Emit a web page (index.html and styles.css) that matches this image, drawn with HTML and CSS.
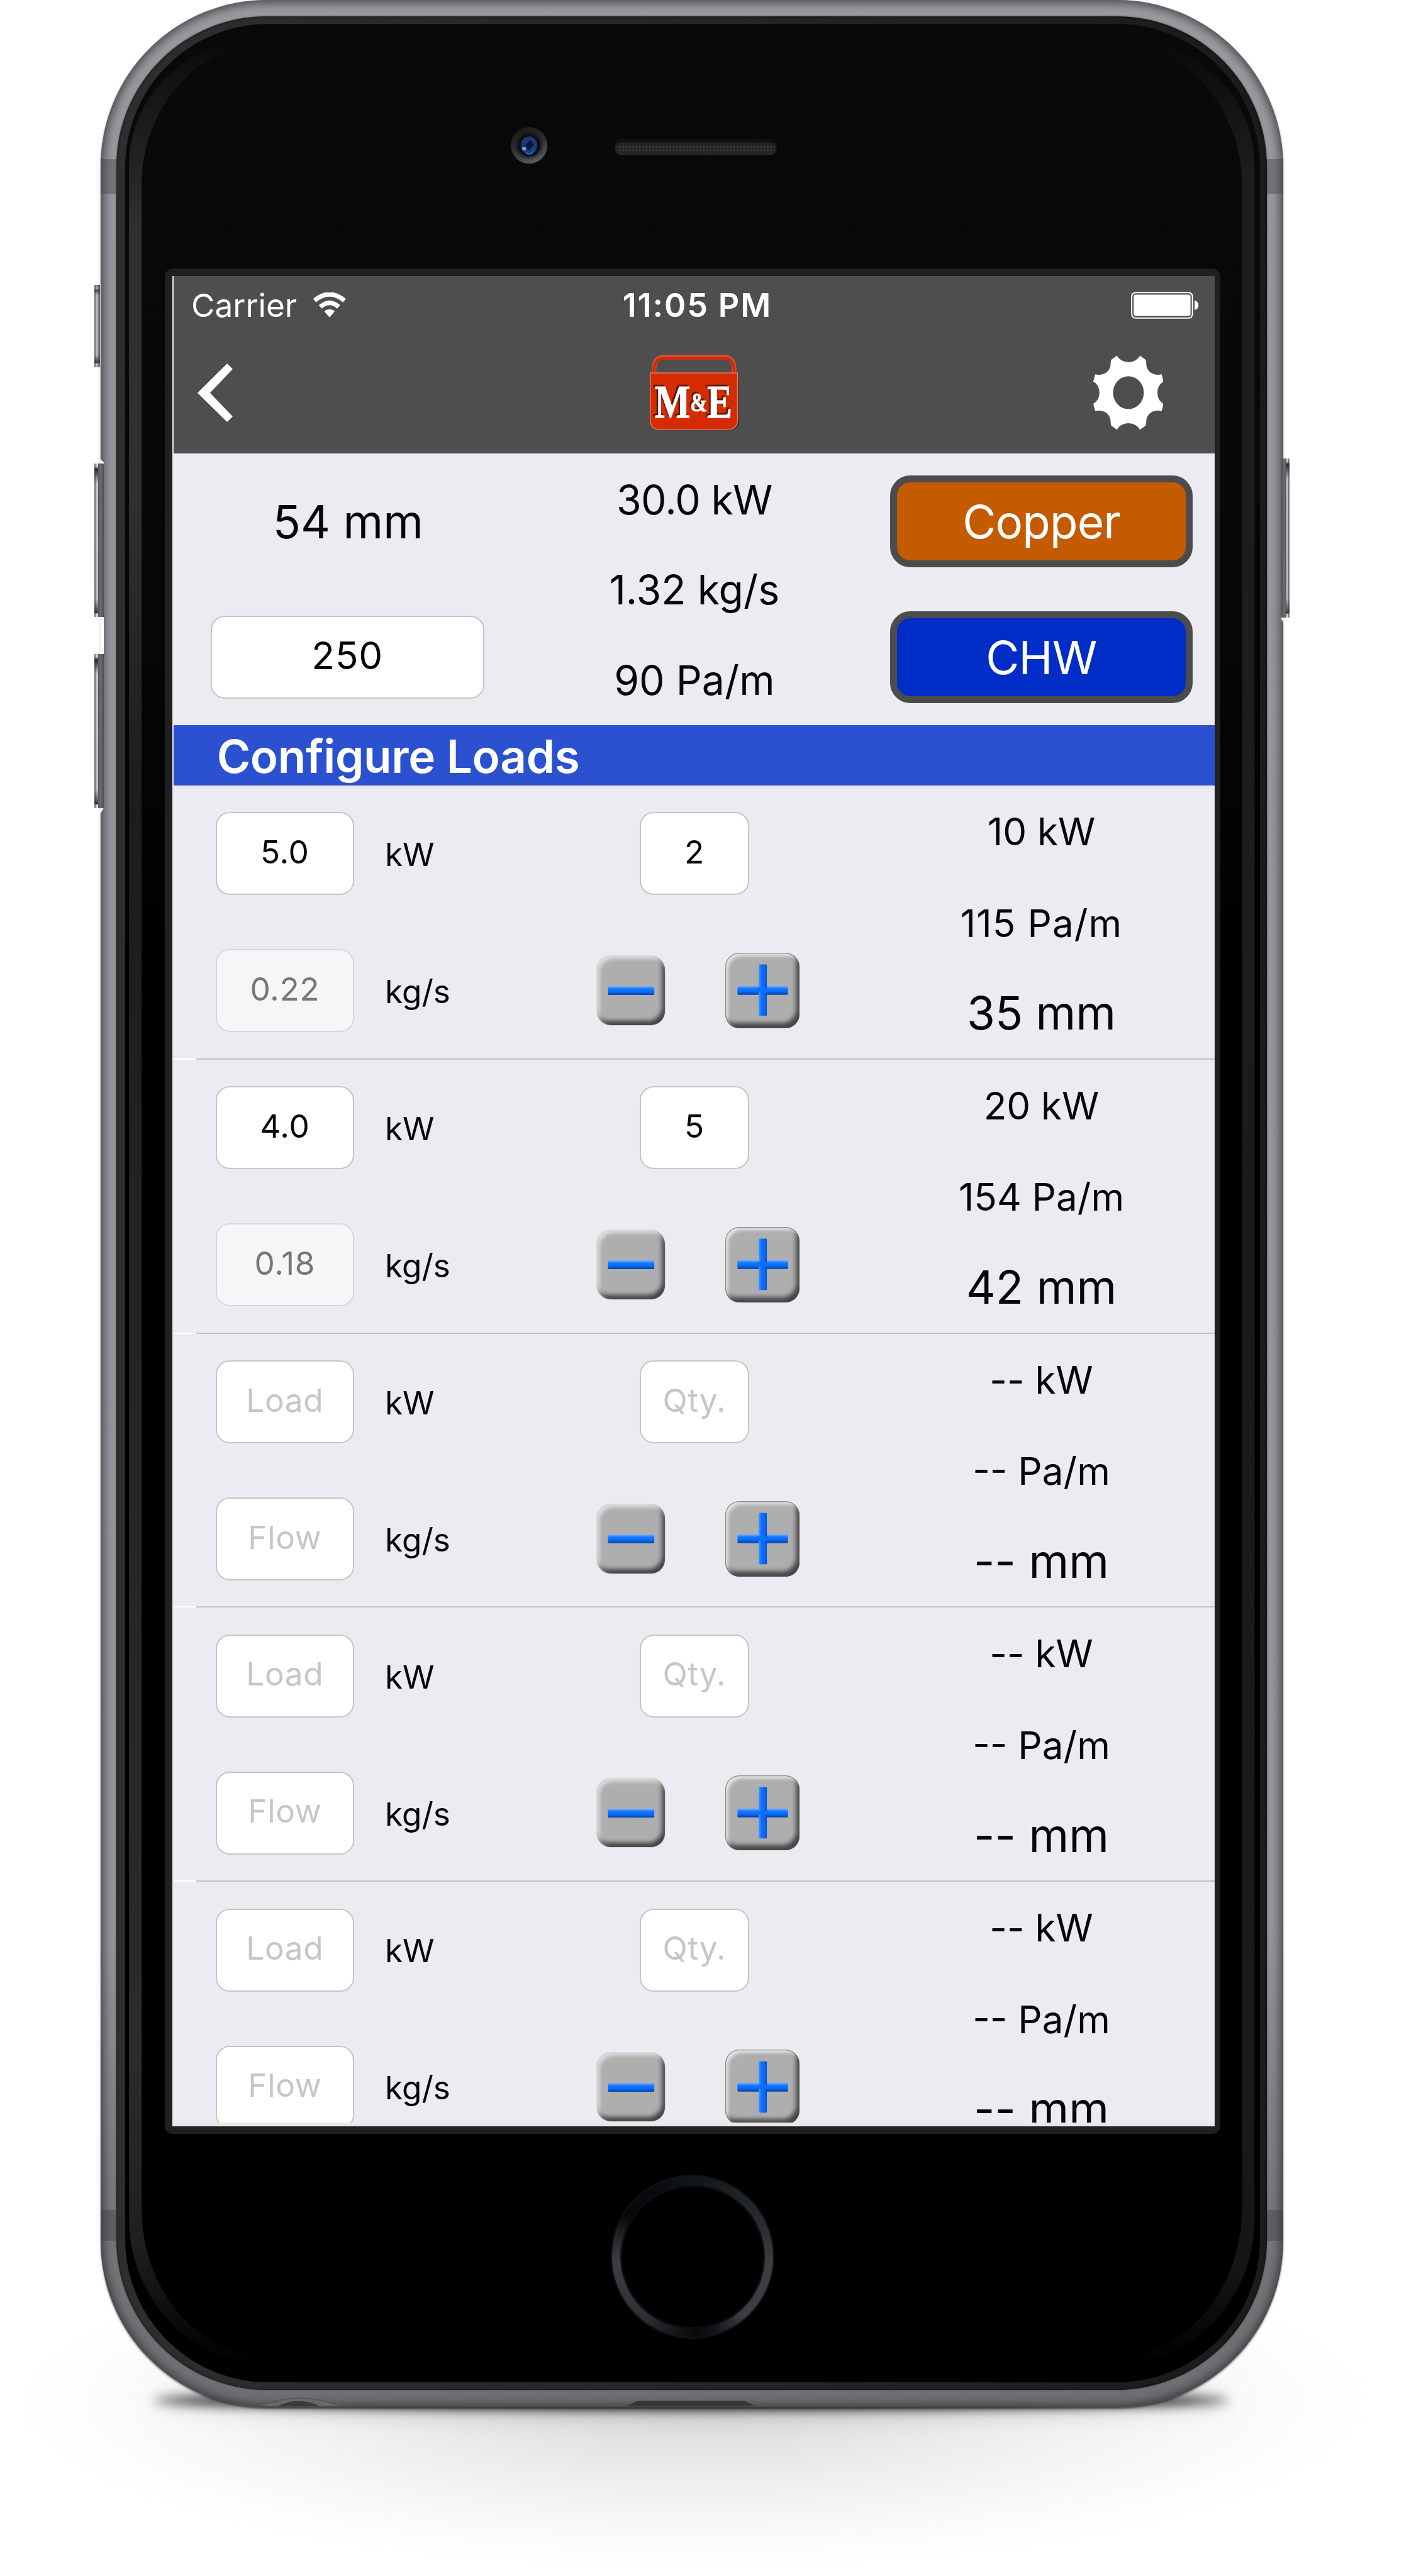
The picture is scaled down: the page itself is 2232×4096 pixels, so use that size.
FILE: index.html
```html
<!DOCTYPE html>
<html lang="en">
<head>
<meta charset="utf-8">
<title>Configure Loads</title>
<link rel="stylesheet" href="styles.css">
</head>
<body>
<svg class="defs" aria-hidden="true">
  <defs>
    <linearGradient id="barH" x1="0" y1="0" x2="0" y2="1">
      <stop offset="0" stop-color="#6fb0ff"/><stop offset=".3" stop-color="#1577ff"/><stop offset=".65" stop-color="#066aff"/><stop offset="1" stop-color="#0a3f9c"/>
    </linearGradient>
    <linearGradient id="barV" x1="0" y1="0" x2="1" y2="0">
      <stop offset="0" stop-color="#4a9bff"/><stop offset=".35" stop-color="#0a6fff"/><stop offset=".7" stop-color="#066aff"/><stop offset="1" stop-color="#0a4cb8"/>
    </linearGradient>
  </defs>
  <symbol id="minus" viewBox="0 0 141 143"><rect x="23" y="63" width="96" height="18" rx="2" fill="url(#barH)"/></symbol>
  <symbol id="plus" viewBox="0 0 154 156">
    <rect x="25" y="69" width="105" height="18" rx="2" fill="url(#barH)"/>
    <rect x="69" y="24" width="17" height="107" rx="2" fill="url(#barV)"/>
    <rect x="66" y="73" width="23" height="9" fill="#0a6fff"/>
  </symbol>
</svg>

<div class="stage">
  <div class="shadow-soft"></div>
  <div class="shadow-contact"></div>

  <div class="device">
    <i class="band band-tl"></i><i class="band band-tr"></i><i class="band band-bl"></i><i class="band band-br"></i>
    <i class="notch notch-left"></i><i class="notch notch-right"></i>
    <i class="key key-mute"></i><i class="key key-up"></i><i class="key key-down"></i><i class="key key-power"></i>
    <svg class="ports" viewBox="0 0 2454 40">
      <path d="M325 38Q415 2 502 38Z" fill="#58595c"/>
      <path d="M335 38Q415 7 492 38Z" fill="#68696d"/>
      <path d="M366 38Q410 16 455 38Z" fill="#3a3a3b"/>
      <path d="M1091 38L1114 27H1337L1358 38Z" fill="#363636"/>
    </svg>
    <div class="ring">
      <div class="face">
        <svg class="glare" viewBox="0 0 2355 4896" preserveAspectRatio="none">
          <defs>
            <linearGradient id="gl" x1="0" y1="28" x2="0" y2="4860" gradientUnits="userSpaceOnUse">
              <stop offset="0" stop-color="#2f3030" stop-opacity="0"/><stop offset=".035" stop-color="#2b2d2c" stop-opacity=".5"/><stop offset=".08" stop-color="#2d302f"/><stop offset=".2" stop-color="#2f2f2f"/><stop offset=".33" stop-color="#1c1c1c"/><stop offset=".5" stop-color="#222"/><stop offset=".87" stop-color="#2b2b2b"/><stop offset=".95" stop-color="#1e1e1e"/><stop offset="1" stop-color="#1e1e1e" stop-opacity="0"/>
            </linearGradient>
            <linearGradient id="gr" x1="0" y1="28" x2="0" y2="4860" gradientUnits="userSpaceOnUse">
              <stop offset="0" stop-color="#1e1e1e" stop-opacity="0"/><stop offset=".06" stop-color="#1e1e1e"/><stop offset=".9" stop-color="#191919"/><stop offset=".96" stop-color="#151515"/><stop offset="1" stop-color="#151515" stop-opacity="0"/>
            </linearGradient>
          </defs>
          <path fill="url(#gl)" d="M8 295C8 148 130 28 293 28L285 32C120 60 34 200 34 333V4532C34 4680 120 4820 285 4850L293 4858C130 4858 8 4715 8 4557Z"/>
          <path fill="url(#gr)" d="M2344 295C2344 148 2222 28 2059 28L2067 32C2232 60 2318 200 2318 333V4532C2318 4680 2232 4820 2067 4850L2059 4858C2222 4858 2344 4715 2344 4557Z"/>
        </svg>

        <div class="top-parts">
          <svg class="camera" viewBox="0 0 76 76">
            <defs>
              <linearGradient id="cam" x1=".3" y1="0" x2=".7" y2="1"><stop offset="0" stop-color="#191919"/><stop offset=".5" stop-color="#303030"/><stop offset="1" stop-color="#5e5e5e"/></linearGradient>
              <radialGradient id="lens"><stop offset="0" stop-color="#0b1020"/><stop offset=".55" stop-color="#0b0d14"/><stop offset="1" stop-color="#0b0c10" stop-opacity="0"/></radialGradient>
            </defs>
            <circle cx="38" cy="38" r="38" fill="url(#cam)"/>
            <circle cx="38" cy="38" r="31" fill="url(#lens)"/>
            <circle cx="38" cy="38" r="23" fill="#0c0e15"/>
            <ellipse cx="38" cy="38" rx="17" ry="18" fill="#1c3a7c"/>
            <path d="M27 46Q38 62 50 46L46 55Q38 60 31 55Z" fill="#2a5fc4"/>
            <path d="M30 38L40 27L48 36L38 49Z" fill="#0c1633"/>
            <rect x="24" y="42" width="7" height="6" fill="#8fa4d6"/>
          </svg>
          <div class="speaker"></div>
        </div>

        <div class="bezel">
          <div class="panel">
            <main class="app">
              <header class="header">
                <div class="status">
                  <div class="status-left">
                    <span class="carrier">Carrier</span>
                    <svg class="wifi" viewBox="0 0 70 52">
                      <path d="M35 52L24 39Q35 31 46 39Z" fill="#fff"/>
                      <path d="M16 30Q35 13 54 30" fill="none" stroke="#fff" stroke-width="9.5"/>
                      <path d="M4 17Q35-9 66 17" fill="none" stroke="#fff" stroke-width="9.5"/>
                    </svg>
                  </div>
                  <span class="clock">11:05 PM</span>
                  <svg class="battery" viewBox="0 0 141 56">
                    <rect x="1.5" y="1.5" width="126" height="53" rx="8" fill="none" stroke="#fff" stroke-width="2.6"/>
                    <rect x="5.5" y="6" width="118" height="44" rx="4" fill="#fff"/>
                    <path d="M132 18Q140 20 140 28T132 38Z" fill="#fff"/>
                  </svg>
                </div>
                <nav class="nav">
                  <svg class="back" viewBox="0 0 73 122"><path d="M61.5 0L73 11.500L26 61L73 110L61.500 121.500L0 61Z" fill="#fff"/></svg>
                  <svg class="logo" viewBox="0 0 186 158">
                    <path d="M9 42V28Q9 5 32 5H152Q175 5 175 28V42" fill="none" stroke="#e2563c" stroke-width="9"/>
                    <path d="M9 42V28Q10 7 32 7H152Q174 7 175 28V42" fill="none" stroke="#d12a04" stroke-width="6"/>
                    <rect x="2" y="40" width="183" height="117" rx="18" fill="#5b1608" opacity=".6"/>
                    <path d="M1 38H182V134Q182 155 162 155H20Q1 155 1 134Z" fill="#d42b02" stroke="#e47560" stroke-width="2"/>
                    <g class="logo-text">
                      <text x="10" y="131" font-size="98" textLength="74" lengthAdjust="spacingAndGlyphs">M</text>
                      <text x="84" y="117" font-size="54" textLength="35" lengthAdjust="spacingAndGlyphs">&amp;</text>
                      <text x="119" y="131" font-size="98" textLength="52" lengthAdjust="spacingAndGlyphs">E</text>
                    </g>
                  </svg>
                  <svg class="gear" viewBox="-73 -77.500 146 155">
                    <path fill="#fff" fill-rule="evenodd" d="M24-77L36-68L37-62C36-46 48-37 62-37L69-38L73-23C56-15 56 15 73 23L69 38L62 37C48 37 36 46 37 62L36 68L24 77C14 59-14 59-24 77L-36 68L-37 62C-36 46-48 37-62 37L-69 38L-73 23C-56 15-56-15-73-23L-69-38L-62-37C-48-37-36-46-37-62L-36-68L-24-77C-14-59 14-59 24-77ZM0-34A32 34 0 1 0 0 34A32 34 0 1 0 0-34Z"/>
                  </svg>
                </nav>
              </header>

              <section class="summary">
                <div class="summary-size">
                  <div class="half t17">54 mm</div>
                  <div class="half"><div class="field field-wide">250</div></div>
                </div>
                <div class="summary-totals">
                  <div class="total tight">30.0 kW</div>
                  <div class="total total-mid">1.32 kg/s</div>
                  <div class="total">90 Pa/m</div>
                </div>
                <div class="summary-actions">
                  <div class="half"><div class="btn btn-copper">Copper</div></div>
                  <div class="half"><div class="btn btn-chw">CHW</div></div>
                </div>
              </section>

              <h2 class="section-title">Configure Loads</h2>

              <section class="row">
                <div class="inputs">
                  <div class="line"><div class="field">5.0</div><span class="unit">kW</span></div>
                  <div class="line"><div class="field disabled">0.22</div><span class="unit">kg/s</span></div>
                </div>
                <div class="count">
                  <div class="field field-qty">2</div>
                  <div class="steps"><div class="step step-minus"><svg><use href="#minus"/></svg></div><div class="step step-plus"><svg><use href="#plus"/></svg></div></div>
                </div>
                <div class="result"><div>10 kW</div><div class="wide">115 Pa/m</div><div class="pipe">35 mm</div></div>
              </section>

              <section class="row">
                <div class="inputs">
                  <div class="line"><div class="field">4.0</div><span class="unit">kW</span></div>
                  <div class="line"><div class="field disabled">0.18</div><span class="unit">kg/s</span></div>
                </div>
                <div class="count">
                  <div class="field field-qty">5</div>
                  <div class="steps"><div class="step step-minus"><svg><use href="#minus"/></svg></div><div class="step step-plus"><svg><use href="#plus"/></svg></div></div>
                </div>
                <div class="result"><div>20 kW</div><div>154 Pa/m</div><div class="pipe">42 mm</div></div>
              </section>

              <section class="row">
                <div class="inputs">
                  <div class="line"><div class="field empty">Load</div><span class="unit">kW</span></div>
                  <div class="line"><div class="field empty">Flow</div><span class="unit">kg/s</span></div>
                </div>
                <div class="count">
                  <div class="field field-qty empty">Qty.</div>
                  <div class="steps"><div class="step step-minus"><svg><use href="#minus"/></svg></div><div class="step step-plus"><svg><use href="#plus"/></svg></div></div>
                </div>
                <div class="result"><div>-- kW</div><div>-- Pa/m</div><div class="pipe">-- mm</div></div>
              </section>

              <section class="row">
                <div class="inputs">
                  <div class="line"><div class="field empty">Load</div><span class="unit">kW</span></div>
                  <div class="line"><div class="field empty">Flow</div><span class="unit">kg/s</span></div>
                </div>
                <div class="count">
                  <div class="field field-qty empty">Qty.</div>
                  <div class="steps"><div class="step step-minus"><svg><use href="#minus"/></svg></div><div class="step step-plus"><svg><use href="#plus"/></svg></div></div>
                </div>
                <div class="result"><div>-- kW</div><div>-- Pa/m</div><div class="pipe">-- mm</div></div>
              </section>

              <section class="row">
                <div class="inputs">
                  <div class="line"><div class="field empty">Load</div><span class="unit">kW</span></div>
                  <div class="line"><div class="field empty">Flow</div><span class="unit">kg/s</span></div>
                </div>
                <div class="count">
                  <div class="field field-qty empty">Qty.</div>
                  <div class="steps"><div class="step step-minus"><svg><use href="#minus"/></svg></div><div class="step step-plus"><svg><use href="#plus"/></svg></div></div>
                </div>
                <div class="result"><div>-- kW</div><div>-- Pa/m</div><div class="pipe">-- mm</div></div>
              </section>
            </main>
          </div>
        </div>

        <div class="home"><div class="home-band"><div class="home-pad"></div></div></div>
      </div>
    </div>
  </div>
</div>
</body>
</html>
```
FILE: styles.css
```css
/* 1rem = 100 artwork units */
html { font-size: 76.596px; }
* { box-sizing: border-box; }
body {
  margin: 0;
  background: #fff;
  font-family: Inter, "Liberation Sans", sans-serif;
  color: #060606;
}
.defs { position: absolute; width: 0; height: 0; }
.stage {
  position: relative;
  width: 2232px;
  height: 4096px;
  padding-left: 2.09rem;
  overflow: hidden;
}

/* floor shadows */
.shadow-soft {
  position: absolute;
  left: 0.1rem;
  top: 46.3rem;
  width: 28.6rem;
  height: 7.1rem;
  background: radial-gradient(ellipse closest-side, rgba(0,0,0,.15), rgba(0,0,0,.11) 25%, rgba(0,0,0,.055) 55%, rgba(0,0,0,.018) 80%, transparent);
}
.shadow-contact {
  position: absolute;
  left: 3.2rem;
  top: 49.66rem;
  width: 22.3rem;
  height: .34rem;
  border-radius: 50%;
  background: #000;
  box-shadow: 0 0 .45rem .08rem rgba(0,0,0,.22);
  filter: blur(.12rem);
}

/* device body */
.device {
  position: relative;
  width: 24.54rem;
  height: 49.975rem;
  padding: .34rem .34rem .365rem .33rem;
  border-radius: 3.45rem;
  background: linear-gradient(#9a9b9f 0, #97989e 10%, #95969c 80%, #76777b 92%, #6e6f73 100%);
  box-shadow: inset 0 0 .2rem .06rem rgba(38,38,42,.72), 0 .02rem .04rem rgba(0,0,0,.5);
}
.band {
  position: absolute;
  width: .34rem;
  height: .72rem;
  background: rgba(60,62,64,.4);
}
.band-tl { left: 0; top: 3.3rem; }
.band-tr { right: 0; top: 3.3rem; }
.band-bl { left: 0; top: 45.88rem; height: .64rem; }
.band-br { right: 0; top: 45.88rem; height: .64rem; }
.notch { position: absolute; width: .08rem; background: #fff; }
.notch-left { left: -.01rem; top: 9.53rem; height: 7.37rem; clip-path: polygon(0 0, 100% 1%, 100% 98%, 0 100%); }
.notch-right { right: -.01rem; width: .05rem; top: 9.5rem; height: 3.42rem; clip-path: polygon(0 2%, 100% 0, 100% 100%, 0 98%); }
.key {
  position: absolute;
  left: -.13rem;
  width: .2rem;
  border-radius: .05rem 0 0 .05rem;
  background:
    linear-gradient(90deg, transparent 38%, #55575c 39%, #6a6c71 65%, #4d4f53),
    linear-gradient(#c9cacf 0, #c9cacf 2%, #2b2c31 3.500%, #3a3b40 5%, #c3c4ca 13%, #b9bcc2 88%, #4a4b50 96%, #2b2c31 97%, #d0d1d4 98%);
}
.key::before {
  content: "";
  position: absolute;
  inset: 0 auto 0 0;
  width: .02rem;
  background: rgba(50,52,56,.6);
}
.key-mute { width: .12rem; top: 5.92rem; height: 1.7rem; background: linear-gradient(#8b8c92 0, #b4b5bb 4%, #4b4c51 7%, #bfc2c9 12%, #bfc2c9 85%, #3a3b40 94%, #c4c5c9 96%); box-shadow: inset -.04rem 0 .04rem rgba(60,60,66,.7); }
.key-up { top: 9.62rem; height: 3.19rem; }
.key-down { top: 13.58rem; height: 3.19rem; }
.key-power { left: auto; right: -.13rem; width: .17rem; top: 9.52rem; height: 3.3rem; transform: scaleX(-1); }
.ports { position: absolute; left: 0; bottom: 0; width: 24.54rem; height: .4rem; }

.ring {
  height: 49.27rem;
  padding: .16rem .14rem .15rem .18rem;
  border-radius: 3.12rem;
  background: linear-gradient(90deg, #2e2e2e, #282828 40%, #1b1b1b);
  box-shadow: inset 0 0 .05rem #0c0c0c, 0 0 .04rem #3f4044;
}
.face {
  position: relative;
  height: 48.96rem;
  border-radius: 2.97rem;
  background: linear-gradient(#090909 0, #080808 20%, #000 42%);
}
.glare { position: absolute; inset: 0; width: 100%; height: 100%; }

.top-parts {
  display: flex;
  align-items: flex-start;
  gap: 1.4rem;
  height: 5.08rem;
  padding: 2.136rem 0 0 8rem;
}
.camera { width: .76rem; height: .76rem; }
.speaker {
  width: 3.36rem;
  height: .33rem;
  margin-top: .255rem;
  border-radius: .16rem;
  background: radial-gradient(circle, #3c3c3c 30%, #222 60%) 0 .06rem / .07rem .07rem;
  box-shadow: inset 0 .08rem .05rem #101010, inset 0 -.08rem .02rem #262626;
}

.bezel {
  width: 21.91rem;
  height: 38.72rem;
  margin-left: .82rem;
  padding: .15rem 0 0 .162rem;
  border-radius: .17rem;
  background: #202020;
}
.panel {
  width: 21.633rem;
  height: 38.41rem;
  padding-left: .028rem;
  background: #e8e7e9;
}
.app {
  width: 21.605rem;
  height: 38.33rem;
  overflow: hidden;
  background: #ecebf2;
}

/* header */
.header { height: 3.685rem; background: #4e4e4e; color: #fff; }
.status {
  display: grid;
  grid-template-columns: 1fr auto 1fr;
  align-items: center;
  height: 1.21rem;
  padding: 0 .325rem 0 .36rem;
  font-size: .67rem;
}
.status-left { display: flex; align-items: center; gap: .32rem; }
.wifi { width: .7rem; height: .52rem; }
.clock { font-size: .68rem; font-weight: 600; letter-spacing: .036em; margin-right: -.036em; padding-left: .06rem; }
.battery { width: 1.41rem; height: .56rem; justify-self: end; }
.nav {
  display: grid;
  grid-template-columns: 1fr auto 1fr;
  align-items: center;
  height: 2.435rem;
  padding: 0 1.07rem 0 .485rem;
}
.back { width: .73rem; height: 1.22rem; }
.logo { width: 1.86rem; height: 1.58rem; margin-left: .6rem; }
.logo-text {
  font-family: "Liberation Serif", serif;
  font-weight: 700;
  fill: #fff;
  stroke: #fff;
  stroke-width: 1.5px;
  filter: drop-shadow(-3px -3px 1px rgba(60,15,5,.85));
}
.gear { width: 1.46rem; height: 1.55rem; justify-self: end; }

/* shared controls */
.field {
  display: flex;
  align-items: center;
  justify-content: center;
  width: 2.865rem;
  height: 1.725rem;
  padding-bottom: .09rem;
  border: .03rem solid #c5c5c9;
  border-radius: .29rem;
  background: #fff;
  font-size: .67rem;
  letter-spacing: .012em;
}
.field-wide { width: 5.68rem; padding-bottom: .05rem; font-size: .785rem; letter-spacing: .015em; }
.field-qty { width: 2.28rem; }
.disabled { background: #f6f6f9; border-color: #d8d8dc; color: #77777a; }
.empty { color: #c5c5cb; }

/* summary */
.summary { display: grid; grid-template-columns: repeat(3, 1fr); height: 5.635rem; text-align: center; }
.half { display: flex; align-items: center; justify-content: center; height: 2.8175rem; }
.t17 { font-size: .95rem; padding: .02rem 0 0 .03rem; }
.total { height: 1.91rem; line-height: 1.94rem; font-size: .84rem; }
.total-mid { height: 1.84rem; line-height: 1.87rem; }
.tight { letter-spacing: -.012em; }
.btn {
  display: flex;
  align-items: center;
  justify-content: center;
  width: 6.27rem;
  height: 1.9rem;
  padding-top: .03rem;
  border: .15rem solid #4c4c4c;
  border-radius: .42rem;
  color: #fff;
  font-size: .95rem;
  letter-spacing: -.012em;
}
.btn-copper { background: #c55b00; }
.btn-chw { background: #002dc5; }

.section-title {
  height: 1.26rem;
  margin: 0;
  padding-left: .89rem;
  background: #2b50d0;
  color: #fff;
  font-size: .95rem;
  font-weight: 600;
  line-height: 1.31rem;
  letter-spacing: -.005em;
}

/* load rows */
.row {
  display: grid;
  grid-template-columns: repeat(3, 1fr);
  height: 5.69rem;
  background: linear-gradient(90deg, #fff .465rem, #c3c3c8 .465rem) 0 100% / 100% .03rem no-repeat;
}
.inputs { display: flex; flex-direction: column; gap: 1.12rem; padding: .55rem 0 0 .87rem; }
.line { display: flex; align-items: center; gap: .645rem; }
.unit { padding-top: .02rem; font-size: .67rem; }
.count { display: flex; flex-direction: column; align-items: center; padding-top: .55rem; }
.steps { display: flex; align-items: center; gap: 1.26rem; margin-top: 1.2rem; padding-left: .16rem; }
.step { border-radius: .29rem; background: #aeaeae; }
.step svg { display: block; width: 100%; height: 100%; }
.step-minus {
  width: 1.41rem;
  height: 1.43rem;
  box-shadow: inset .05rem .06rem .09rem rgba(255,255,255,.6), inset -.06rem -.09rem .1rem rgba(0,0,0,.62), 0 0 .02rem #8a8a8a;
}
.step-plus {
  width: 1.545rem;
  height: 1.56rem;
  box-shadow: inset 0 0 0 .015rem rgba(80,80,80,.6), inset .06rem .07rem .07rem rgba(255,255,255,.65), inset -.07rem -.11rem .1rem rgba(0,0,0,.6);
}
.result { text-align: center; font-size: .785rem; line-height: 1.9rem; padding-top: .01rem; }
.wide { letter-spacing: .018em; }
.pipe { font-size: .95rem; line-height: 1.83rem; }

/* home button */
.home {
  width: 3.4rem;
  height: 3.4rem;
  margin: .85rem auto 0;
  padding: .03rem;
  border-radius: 50%;
  background: #111213;
}
.home-band {
  height: 100%;
  padding: .17rem;
  border-radius: 50%;
  background: conic-gradient(#10161a 0, #1a2023 30deg, #2b2c31 65deg, #3d3d43 95deg, #3b3b41 140deg, #14181a 162deg, #06090a 178deg, #14171b 192deg, #2c2c32 215deg, #3e3e44 265deg, #2c2d33 280deg, #050708 302deg, #080b0d 330deg, #10161a 360deg);
}
.home-pad {
  height: 100%;
  border-radius: 50%;
  background: #000;
  border: .04rem solid #0d0e0f;
}
```
